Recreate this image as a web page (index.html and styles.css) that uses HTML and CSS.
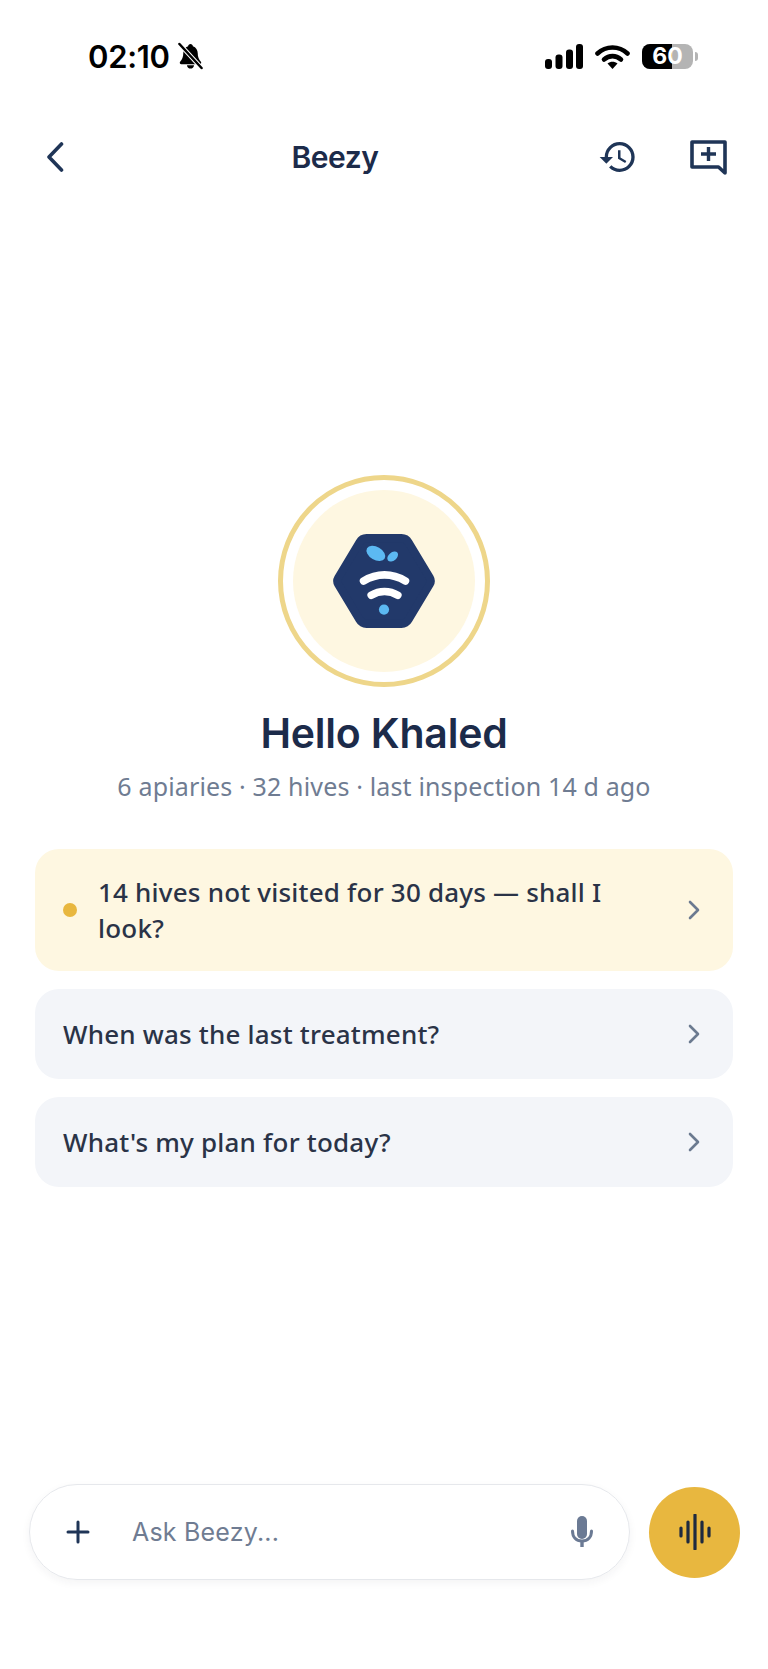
FILE: index.html
```html
<!DOCTYPE html>
<html lang="en">

<head>
    <meta charset="UTF-8">
    <meta name="viewport" content="width=device-width, initial-scale=1.0">
    <title>Beezy</title>
    <link rel="stylesheet" href="styles.css">
</head>

<body>
    <div class="status">
        <span class="time">02:10</span>
        <svg class="bell" width="25" height="28" viewBox="0 0 26 28">
            <path d="M13 1.500c-1.400 0-2.300 1-2.500 2.300C7.300 4.900 5.500 7.700 5.500 11c0 4.500-1.200 6.500-3.300 9-.8 1-.3 2.500 1.200 2.500h19.200c1.500 0 2-1.500 1.200-2.500-2.100-2.500-3.300-4.500-3.300-9 0-3.300-1.800-6.100-5-7.200-.2-1.300-1.100-2.300-2.500-2.300z" fill="#000"/>
            <path d="M9.300 23.500h7.400c-.3 2.100-1.800 3.500-3.700 3.500s-3.400-1.400-3.700-3.500z" fill="#000"/>
            <path d="M2 2l22 24" stroke="#fff" stroke-width="4.600"/>
            <path d="M1.500 1.500l23 25" stroke="#000" stroke-width="2.600" stroke-linecap="round"/>
        </svg>
        <div class="status-right">
            <svg width="38" height="25" viewBox="0 0 38 25">
                <rect x="0" y="15" width="7" height="10" rx="3" fill="#000"/>
                <rect x="10.500" y="10.500" width="7" height="14.500" rx="3" fill="#000"/>
                <rect x="21" y="5.500" width="7" height="19.500" rx="3" fill="#000"/>
                <rect x="31" y="0" width="7" height="25" rx="3" fill="#000"/>
            </svg>
            <svg width="35" height="25" viewBox="0 0 35 25">
                <path d="M2.500 9.500C11 1.500 24 1.500 32.500 9.500" fill="none" stroke="#000" stroke-width="4.600" stroke-linecap="round"/>
                <path d="M9 15.500c5-4.500 12-4.500 17 0" fill="none" stroke="#000" stroke-width="4.600" stroke-linecap="round"/>
                <path d="M12.500 19.500c3-2.500 7-2.500 10 0L17.500 25z" fill="#000"/>
            </svg>
            <div class="battery">
                <div class="battery-body"><span class="battery-fill"></span><span class="battery-num">60</span></div>
                <span class="battery-cap"></span>
            </div>
        </div>
    </div>

    <header class="nav">
        <svg class="back" width="18" height="30" viewBox="0 0 18 30">
            <path d="M15.500 2L3 15l12.500 13" fill="none" stroke="#1f3557" stroke-width="3.600" stroke-linecap="round" stroke-linejoin="round"/>
        </svg>
        <h2 class="nav-title">Beezy</h2>
        <svg class="history" width="40" height="40" viewBox="0 0 24 24">
            <path d="M13 3a9 9 0 0 0-9 9H1l3.890 3.890.070.140L9 12H6c0-3.870 3.130-7 7-7s7 3.130 7 7-3.130 7-7 7c-1.930 0-3.680-.790-4.940-2.060l-1.420 1.420A8.954 8.954 0 0 0 13 21a9 9 0 0 0 0-18zm-1 5v5l4.280 2.540.720-1.210-3.500-2.080V8H12z" fill="#1f3557"/>
        </svg>
        <svg class="new-chat" width="37" height="35" viewBox="0 0 37 35">
            <path d="M2 2h33v31l-6.500-6H2z" fill="none" stroke="#1f3557" stroke-width="3.600" stroke-linejoin="round"/>
            <path d="M18.500 7v14M11 14h15" stroke="#1f3557" stroke-width="3.400"/>
        </svg>
    </header>

    <main class="main">
        <div class="ring">
            <div class="ring-inner">
                <svg width="104" height="94" viewBox="0 0 102 92">
                    <path d="M34 4h34a8 8 0 0 1 7 4l21 35a6 6 0 0 1 0 6L75 84a8 8 0 0 1-7 4H34a8 8 0 0 1-7-4L6 49a6 6 0 0 1 0-6L27 8a8 8 0 0 1 7-4z" fill="#22396a" stroke="#22396a" stroke-width="8" stroke-linejoin="round"/>
                    <ellipse cx="43" cy="19" rx="10" ry="6.400" transform="rotate(30 43 19)" fill="#5cb9f2"/>
                    <ellipse cx="59.500" cy="22" rx="6" ry="4" transform="rotate(-40 59.500 22)" fill="#5cb9f2"/>
                    <path d="M31 46c13-8 28-8 41 0" fill="none" stroke="#fff" stroke-width="7.500" stroke-linecap="round"/>
                    <path d="M38.500 60c8-5 18-5 26 0" fill="none" stroke="#fff" stroke-width="7.500" stroke-linecap="round"/>
                    <circle cx="51" cy="74" r="5" fill="#5cb9f2"/>
                </svg>
            </div>
        </div>

        <h1 class="hello">Hello Khaled</h1>
        <p class="summary">6 apiaries · 32 hives · last inspection 14 d ago</p>

        <div class="cards">
            <div class="card card-alert">
                <span class="dot"></span>
                <span class="card-text">14 hives not visited for 30 days — shall I look?</span>
                <svg class="chev" width="12" height="20" viewBox="0 0 12 20"><path d="M2 2l8 8-8 8" fill="none" stroke="#6b7a90" stroke-width="2.600" stroke-linecap="round" stroke-linejoin="round"/></svg>
            </div>
            <div class="card">
                <span class="card-text">When was the last treatment?</span>
                <svg class="chev" width="12" height="20" viewBox="0 0 12 20"><path d="M2 2l8 8-8 8" fill="none" stroke="#6b7a90" stroke-width="2.600" stroke-linecap="round" stroke-linejoin="round"/></svg>
            </div>
            <div class="card">
                <span class="card-text">What's my plan for today?</span>
                <svg class="chev" width="12" height="20" viewBox="0 0 12 20"><path d="M2 2l8 8-8 8" fill="none" stroke="#6b7a90" stroke-width="2.600" stroke-linecap="round" stroke-linejoin="round"/></svg>
            </div>
        </div>
    </main>

    <footer class="composer">
        <div class="pill">
            <svg class="plus" width="24" height="24" viewBox="0 0 24 24"><path d="M12 2v20M2 12h20" stroke="#1f3557" stroke-width="3" stroke-linecap="round"/></svg>
            <span class="placeholder">Ask Beezy...</span>
            <svg class="mic" width="24" height="32" viewBox="0 0 24 32">
                <rect x="7" y="0" width="10" height="23" rx="5" fill="#6b7a94"/>
                <path d="M2.500 15c0 6 3.500 10 9.500 10s9.500-4 9.500-10" fill="none" stroke="#6b7a94" stroke-width="3" stroke-linecap="round"/>
                <path d="M12 24v7" stroke="#6b7a94" stroke-width="3.400"/>
            </svg>
        </div>
        <div class="fab">
            <svg width="34" height="36" viewBox="0 0 34 36">
                <path d="M3 14v8M10 8v20M17 1v34M24 8v20M31 14v8" stroke="#1e2a3f" stroke-width="3.200" stroke-linecap="round"/>
            </svg>
        </div>
    </footer>
</body>

</html>
```

FILE: styles.css
```css
* { box-sizing: border-box; }
html, body { margin: 0; padding: 0; }
body { display: flex; flex-direction: column; height: 1669px; background: #fff; font-family: "Noto Sans", "Lato", sans-serif; color: #2a3347; }

.status { display: flex; align-items: center; height: 112px; padding: 0 70px 0 88px; color: #000; }
.status .time { font-family: "Inter", sans-serif; font-size: 31px; font-weight: 600; letter-spacing: -0.3px; }
.status .bell { margin-left: 8px; }
.status-right { display: flex; align-items: center; gap: 12px; margin-left: auto; }
.battery { display: flex; align-items: center; gap: 2px; }
.battery-body { position: relative; width: 51px; height: 25px; border-radius: 8px; background: #b4b4b4; text-align: center; }
.battery-fill { position: absolute; left: 0; top: 0; bottom: 0; width: 30px; border-radius: 8px 0 0 8px; background: #000; }
.battery-num { position: relative; display: block; font-family: "Inter", sans-serif; font-size: 23px; font-weight: 700; line-height: 25px; color: #fff; }
.battery-cap { width: 3px; height: 9px; border-radius: 0 3px 3px 0; background: #b4b4b4; }

.nav { display: flex; align-items: center; height: 90px; padding: 0 41px 0 46px; }
.nav-title { flex: 1; margin: 0; padding-left: 8px; text-align: center; font-family: "Inter", sans-serif; font-size: 30px; font-weight: 600; color: #1c2b4a; letter-spacing: -0.5px; }
.new-chat { margin-left: 52px; }

.main { flex: 1; display: flex; flex-direction: column; align-items: center; padding: 273px 35px 0; }
.ring { width: 212px; height: 212px; padding: 10px; border: 5px solid #eed68a; border-radius: 50%; }
.ring-inner { display: flex; align-items: center; justify-content: center; width: 100%; height: 100%; border-radius: 50%; background: #fef7e1; }
.hello { margin: 22px 0 0; font-family: "Inter", sans-serif; font-size: 41px; font-weight: 600; line-height: 48px; color: #1c2b4a; letter-spacing: -0.2px; }
.summary { margin: 13px 0 0; font-size: 25px; line-height: 32px; letter-spacing: 0.15px; color: #6f7c92; }

.cards { display: flex; flex-direction: column; gap: 18px; width: 100%; margin-top: 47px; }
.card { display: flex; align-items: center; min-height: 90px; padding: 0 33px 0 28px; border-radius: 24px; background: #f3f5f9; font-size: 26px; line-height: 36px; font-weight: 500; letter-spacing: 0.2px; }
.card-alert { min-height: 122px; background: #fef7e1; }
.card-text { flex: 1; padding-right: 30px; }
.dot { flex: none; width: 14px; height: 14px; margin-right: 21px; border-radius: 50%; background: #e8b73f; }

.composer { display: flex; align-items: center; gap: 19px; padding: 0 28px 89px 29px; }
.pill { display: flex; align-items: center; flex: 1; height: 96px; padding: 0 35px 0 36px; border: 1px solid #e6e8ec; border-radius: 48px; box-shadow: 0 3px 8px rgba(30, 40, 60, 0.05); }
.placeholder { flex: 1; margin-left: 42px; font-family: "Inter", sans-serif; font-size: 25px; letter-spacing: 0.2px; color: #6f7c92; }
.fab { display: flex; align-items: center; justify-content: center; width: 91px; height: 91px; border-radius: 50%; background: #e8b73f; }
```
